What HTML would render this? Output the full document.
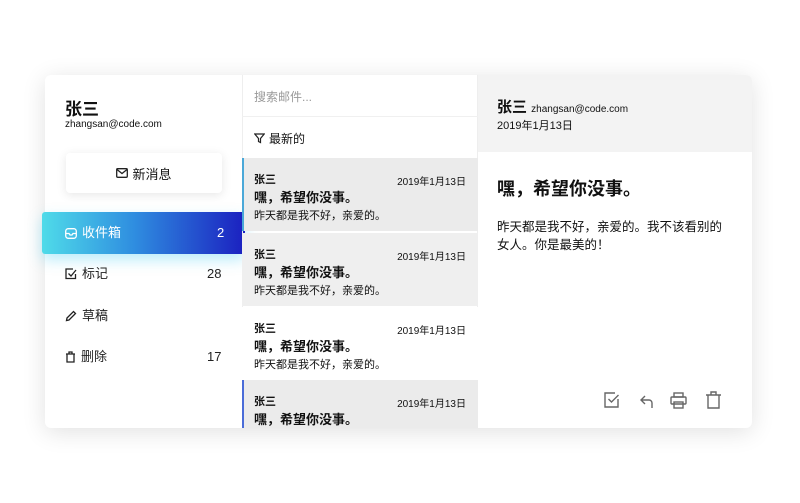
<!DOCTYPE html>
<html><head><meta charset="utf-8"><style>
*{margin:0;padding:0;box-sizing:border-box}
body{width:800px;height:503px;background:#fff;font-family:"Liberation Sans","Noto Sans CJK SC",sans-serif;color:#111;position:relative;overflow:hidden}
.card{position:absolute;left:45px;top:75px;width:707px;height:353px;background:#fff;border-radius:6px;box-shadow:0 4px 24px rgba(0,0,0,.12)}
.abs{position:absolute}
.nav{position:absolute;left:20px;font-size:13px;line-height:16px;color:#222;display:flex;align-items:center;gap:5px}
.cnt{position:absolute;left:162px;font-size:13px;line-height:16px;color:#222}
.item{position:absolute;left:197px;width:236px;height:73px;padding:13px 12px 0 12px}
.item .n{font-size:11px;font-weight:bold}
.item .d{position:absolute;right:12px;top:15px;font-size:10px}
.item .t{font-size:13px;font-weight:bold;margin-top:0px}
.item .p{font-size:11px;margin-top:1px}
</style></head><body>
<div class="card">
 <div class="abs" style="left:20px;top:20px;font-size:17px;font-weight:bold">张三</div>
 <div class="abs" style="left:20px;top:44px;font-size:10px">zhangsan@code.com</div>
 <div class="abs" style="left:21px;top:78px;width:156px;height:40px;background:#fff;box-shadow:0 2px 10px rgba(0,0,0,.1);border-radius:4px;font-size:13px;display:flex;align-items:center;justify-content:center;gap:4px">
  <svg width="12" height="10" viewBox="0 0 12 10"><rect x=".7" y=".7" width="10.6" height="8.6" rx="1" fill="none" stroke="#222" stroke-width="1.3"/><path d="M1 1.5 6 5.5 11 1.5" fill="none" stroke="#222" stroke-width="1.3"/></svg>新消息</div>
 <div class="abs" style="left:-3px;top:137px;width:203px;height:42px;border-radius:3px;background:linear-gradient(90deg,#4fdbe9,#2f8ee0 45%,#1b20c0);box-shadow:0 6px 14px rgba(60,200,240,.35)"></div>
 <div class="nav" style="top:150px;color:#fff"><svg width="12" height="11" viewBox="0 0 12 11"><rect x=".7" y=".7" width="10.6" height="9.6" rx="2.5" fill="none" stroke="#fff" stroke-width="1.3"/><path d="M1 5.5h3l1 1.5h2l1-1.5h3" fill="none" stroke="#fff" stroke-width="1.3"/></svg>收件箱</div>
 <div class="cnt" style="top:150px;color:#fff;left:172px">2</div>
 <div class="nav" style="top:191px"><svg width="12" height="12" viewBox="0 0 12 12"><path d="M10.5 6v4.5h-9.5v-9.5h7" fill="none" stroke="#222" stroke-width="1.3"/><path d="M3.5 5.5 6 8 11 2" fill="none" stroke="#222" stroke-width="1.3"/></svg>标记</div>
 <div class="cnt" style="top:191px">28</div>
 <div class="nav" style="top:233px"><svg width="12" height="12" viewBox="0 0 12 12"><path d="M1.5 10.5 2 8 8.5 1.5l2 2L4 10z" fill="none" stroke="#222" stroke-width="1.3"/></svg>草稿</div>
 <div class="nav" style="top:274px"><svg width="11" height="12" viewBox="0 0 11 12"><path d="M2 3v8h7V3M1 3h9M4 3V1h3v2" fill="none" stroke="#222" stroke-width="1.3"/></svg>删除</div>
 <div class="cnt" style="top:274px">17</div>

 <div class="abs" style="left:197px;top:0;width:236px;height:353px;border-left:1px solid #eee;border-right:1px solid #eee"></div>
 <div class="abs" style="left:209px;top:13px;font-size:12px;color:#999">搜索邮件...</div>
 <div class="abs" style="left:197px;top:41px;width:236px;border-top:1px solid #f0f0f0"></div>
 <div class="abs" style="left:209px;top:55px;font-size:12px;display:flex;align-items:center;gap:4px"><svg width="11" height="11" viewBox="0 0 11 11"><path d="M.8 1h9.4L6.5 5.5v4L4.5 8.5v-3z" fill="none" stroke="#222" stroke-width="1.2"/></svg>最新的</div>
 <div class="item" style="top:83px;background:#ebebeb;border-left:2px solid #4aa8d8;padding-left:10px"><div class="n">张三</div><div class="d">2019年1月13日</div><div class="t">嘿，希望你没事。</div><div class="p">昨天都是我不好，亲爱的。</div></div>
 <div class="item" style="top:158px;background:#efefef"><div class="n">张三</div><div class="d">2019年1月13日</div><div class="t">嘿，希望你没事。</div><div class="p">昨天都是我不好，亲爱的。</div></div>
 <div class="item" style="top:232px;background:#fff"><div class="n">张三</div><div class="d">2019年1月13日</div><div class="t">嘿，希望你没事。</div><div class="p">昨天都是我不好，亲爱的。</div></div>
 <div class="item" style="top:305px;height:48px;background:#ebebeb;border-left:2px solid #4a6cd8;padding-left:10px;border-bottom-left-radius:0"><div class="n">张三</div><div class="d">2019年1月13日</div><div class="t">嘿，希望你没事。</div></div>

 <div class="abs" style="left:433px;top:0;width:274px;height:77px;background:#f3f3f3;border-top-right-radius:6px"></div>
 <div class="abs" style="left:452px;top:21px;font-size:15px;font-weight:bold">张三 <span style="font-size:10px;font-weight:normal">zhangsan@code.com</span></div>
 <div class="abs" style="left:452px;top:42px;font-size:11px">2019年1月13日</div>
 <div class="abs" style="left:452px;top:100px;font-size:18px;font-weight:bold">嘿，希望你没事。</div>
 <div class="abs" style="left:452px;top:143px;width:228px;font-size:12.5px;line-height:18px">昨天都是我不好，亲爱的。我不该看别的女人。你是最美的！</div>
 <svg class="abs" style="left:558px;top:315px" width="125" height="20" viewBox="0 0 125 20">
  <g fill="none" stroke="#666" stroke-width="1.4">
   <path d="M15 9v8H2V3h10"/><path d="M5.5 9l3 3 7-7"/>
   <path d="M42 6l-4 4 4 4M38 10h8a3 3 0 0 1 3 3v5"/>
   <rect x="71" y="3" width="9" height="4"/><rect x="68" y="7" width="15" height="7" rx="1"/><rect x="71" y="12" width="9" height="6"/>
   <path d="M105 5v13h11V5M103 5h15M108 5V2h5v3"/>
  </g></svg>
</div>
</body></html>
